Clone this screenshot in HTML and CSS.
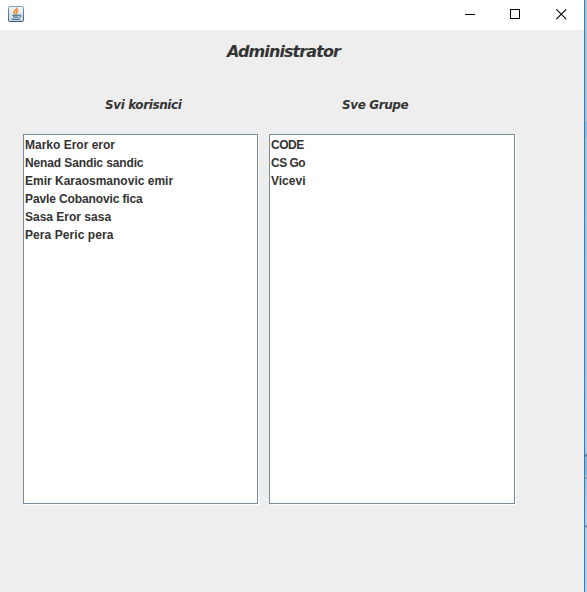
FILE: index.html
```
<!DOCTYPE html>
<html lang="sr">
<head>
<meta charset="utf-8">
<title>Administrator</title>
<link rel="stylesheet" href="styles.css">
</head>
<body>
<div class="window">
  <header class="titlebar">
    <svg class="app-icon" width="16" height="16" viewBox="0 0 16 16">
      <defs><linearGradient id="g" x1="0" y1="0" x2="0" y2="1"><stop offset="0" stop-color="#7fa5bd"/><stop offset="1" stop-color="#315a7c"/></linearGradient>
      <linearGradient id="f" x1="0" y1="0" x2="0" y2="1"><stop offset="0" stop-color="#f4f7fa"/><stop offset="1" stop-color="#c9d6e1"/></linearGradient></defs>
      <rect x=".5" y=".5" width="15" height="15" rx="1.2" fill="url(#f)" stroke="url(#g)"/>
      <path d="M9 1.600C9.400 3.800 6 4.300 6 6.200c0 1 .8 1.500 1.200 2.200M10.500 4.300C8.600 5 8 5.700 8.700 6.600c.5.600.2 1.100-.4 1.600" fill="none" stroke="#ef8a2c" stroke-width="1.600"/>
      <path d="M4.500 9.300h6.300M5 11.100h5.300M3.500 13.300h8.500M11 9.300c2.500-.7 2.500 1.500.3 2.200" fill="none" stroke="#4c7899" stroke-width="1.200"/>
    </svg>
    <div class="controls">
      <svg width="11" height="11" viewBox="0 0 11 11" shape-rendering="crispEdges"><path d="M0 5.500h10" stroke="#000"/></svg>
      <svg width="11" height="11" viewBox="0 0 11 11" shape-rendering="crispEdges"><path d="M.5.5h9v9h-9z" fill="none" stroke="#000"/></svg>
      <svg width="11" height="11" viewBox="0 0 11 11"><path d="M.3.3l9.900 9.900M10.200.3L.3 10.200" stroke="#000" stroke-width="1.100"/></svg>
    </div>
  </header>
  <main class="content">
    <h1 class="heading">Administrator</h1>
    <div class="columns">
      <section class="users">
        <h2 class="label">Svi korisnici</h2>
        <ul class="list">
          <li>Marko Eror eror</li>
          <li class="snug">Nenad Sandic sandic</li>
          <li>Emir Karaosmanovic emir</li>
          <li class="snug">Pavle Cobanovic fica</li>
          <li>Sasa Eror sasa</li>
          <li class="loose">Pera Peric pera</li>
        </ul>
      </section>
      <section class="groups">
        <h2 class="label">Sve Grupe</h2>
        <ul class="list">
          <li class="tight">CODE</li>
          <li class="tight">CS Go</li>
          <li>Vicevi</li>
        </ul>
      </section>
    </div>
  </main>
</div>
<div class="desktop"></div>
</body>
</html>
```
FILE: styles.css
```
* { box-sizing: border-box; }
body {
  margin: 0;
  display: flex;
  width: 587px;
  height: 592px;
  overflow: hidden;
  font-family: "Liberation Sans", Arial, sans-serif;
  color: #333;
}
.window {
  width: 585px;
  height: 592px;
  background: #eee;
  border-right: 1px solid #1883d7;
}
.desktop {
  width: 2px;
  background: linear-gradient(#c0c0c0 0, #b9c0c8 121px, #9db6cc 122px, #9db6cc 136px, #b6bfca 137px, #bfc4cd 453px, #a3aebc 454px, #68717d 455px, #68717d 456px, #9aafc8 457px, #9aafc8 475px, #ccc 476px, #888f99 478px, #b6bdd0 479px, #c2c5d3 509px, #c2c8d0 525px, #6d7580 526px, #c2c8ce 528px, #c4cad1 592px);
}
.titlebar {
  display: flex;
  justify-content: space-between;
  height: 30px;
  padding: 6px 17px 0 8px;
  background: #fff;
}
.controls { display: flex; gap: 34px; padding-top: 3px; }
.controls svg:last-child { margin-left: 1px; }
.heading {
  margin: 0;
  padding: 10px 0 0 227px;
  height: 63px;
  font: italic bold 16px/24px "DejaVu Sans", sans-serif;
  letter-spacing: -0.9px;
  white-space: nowrap;
}
.columns { display: flex; gap: 11px; padding-left: 23px; }
.users { width: 235px; }
.groups { width: 246px; }
.label {
  margin: 0;
  height: 41px;
  font: italic bold 12px/24px "DejaVu Sans", sans-serif;
  letter-spacing: -0.4px;
  white-space: nowrap;
}
.users .label { padding-left: 82px; }
.groups .label { padding-left: 73px; }
.list {
  margin: 0;
  padding: 1px;
  height: 370px;
  list-style: none;
  background: #fff;
  border: 1px solid #7a8a99;
  box-shadow: 1px 1px #fff;
  font-size: 12px;
  font-weight: bold;
  line-height: 18px;
}
.snug { letter-spacing: -0.12px; }
.tight { letter-spacing: -0.5px; }
.loose { letter-spacing: 0.07px; }
```
